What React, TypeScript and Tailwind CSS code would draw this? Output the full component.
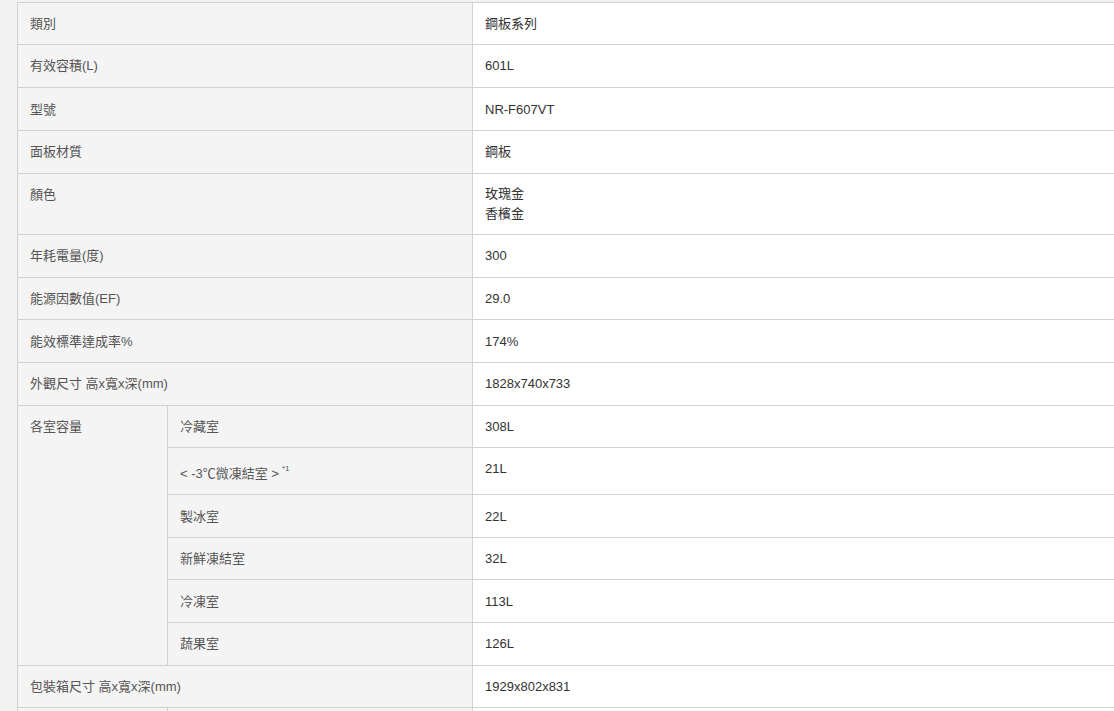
import React from "react";

type Row = { label: string; value: React.ReactNode };

const topRows: Row[] = [
  { label: "類別", value: "鋼板系列" },
  { label: "有效容積(L)", value: "601L" },
  { label: "型號", value: "NR-F607VT" },
  { label: "面板材質", value: "鋼板" },
  {
    label: "顏色",
    value: (
      <span className="block leading-[20px]">
        玫瑰金
        <br />
        香檳金
      </span>
    ),
  },
  { label: "年耗電量(度)", value: "300" },
  { label: "能源因數值(EF)", value: "29.0" },
  { label: "能效標準達成率%", value: "174%" },
  { label: "外觀尺寸 高x寬x深(mm)", value: "1828x740x733" },
];

const rooms: Row[] = [
  { label: "冷藏室", value: "308L" },
  { label: "< -3℃微凍結室 >", value: "21L" },
  { label: "製冰室", value: "22L" },
  { label: "新鮮凍結室", value: "32L" },
  { label: "冷凍室", value: "113L" },
  { label: "蔬果室", value: "126L" },
];

const th =
  "border border-[#d2d2d2] bg-[#f4f4f4] text-[#555] font-normal text-left align-top px-3 py-[10.3px]";
const td =
  "border border-[#d2d2d2] bg-white text-[#333] text-left align-top px-3 py-[10.3px]";

// first row a bit shorter, second a bit taller, as in the source page
const pad = (i: number) =>
  i === 0 ? " !py-[9.8px]" : i === 1 ? " !py-[10.9px]" : "";

export default function App() {
  return (
    <div
      className="w-[1114px] h-[711px] overflow-hidden bg-[#f2f2f2] pt-[2px] pl-[17px]"
      style={{ fontFamily: '"Liberation Sans", Arial, "Noto Sans CJK TC", sans-serif' }}
    >
      <table className="w-[1160px] border-collapse text-[13px] leading-[21px] table-fixed">
        <colgroup>
          <col className="w-[150px]" />
          <col className="w-[305px]" />
          <col />
        </colgroup>
        <tbody>
          {topRows.map((r, i) => (
            <tr key={r.label}>
              <th colSpan={2} className={th + pad(i)}>
                {r.label}
              </th>
              <td className={td + pad(i)}>{r.value}</td>
            </tr>
          ))}
          {rooms.map((r, i) => (
            <tr key={r.label}>
              {i === 0 && (
                <th rowSpan={rooms.length} className={th}>
                  各室容量
                </th>
              )}
              <th className={i === 1 ? th + " pt-[14.8px]" : th}>
                {r.label}
                {i === 1 && (
                  <sup className="relative -top-[7px] text-[8px] leading-none ml-[3px]">*1</sup>
                )}
              </th>
              <td className={td}>{r.value}</td>
            </tr>
          ))}
          <tr>
            <th colSpan={2} className={th}>
              包裝箱尺寸 高x寬x深(mm)
            </th>
            <td className={td}>1929x802x831</td>
          </tr>
          <tr>
            <th rowSpan={2} className={th}>
              重量
            </th>
            <th className={th}>淨重</th>
            <td className={td}>120kg</td>
          </tr>
        </tbody>
      </table>
    </div>
  );
}
